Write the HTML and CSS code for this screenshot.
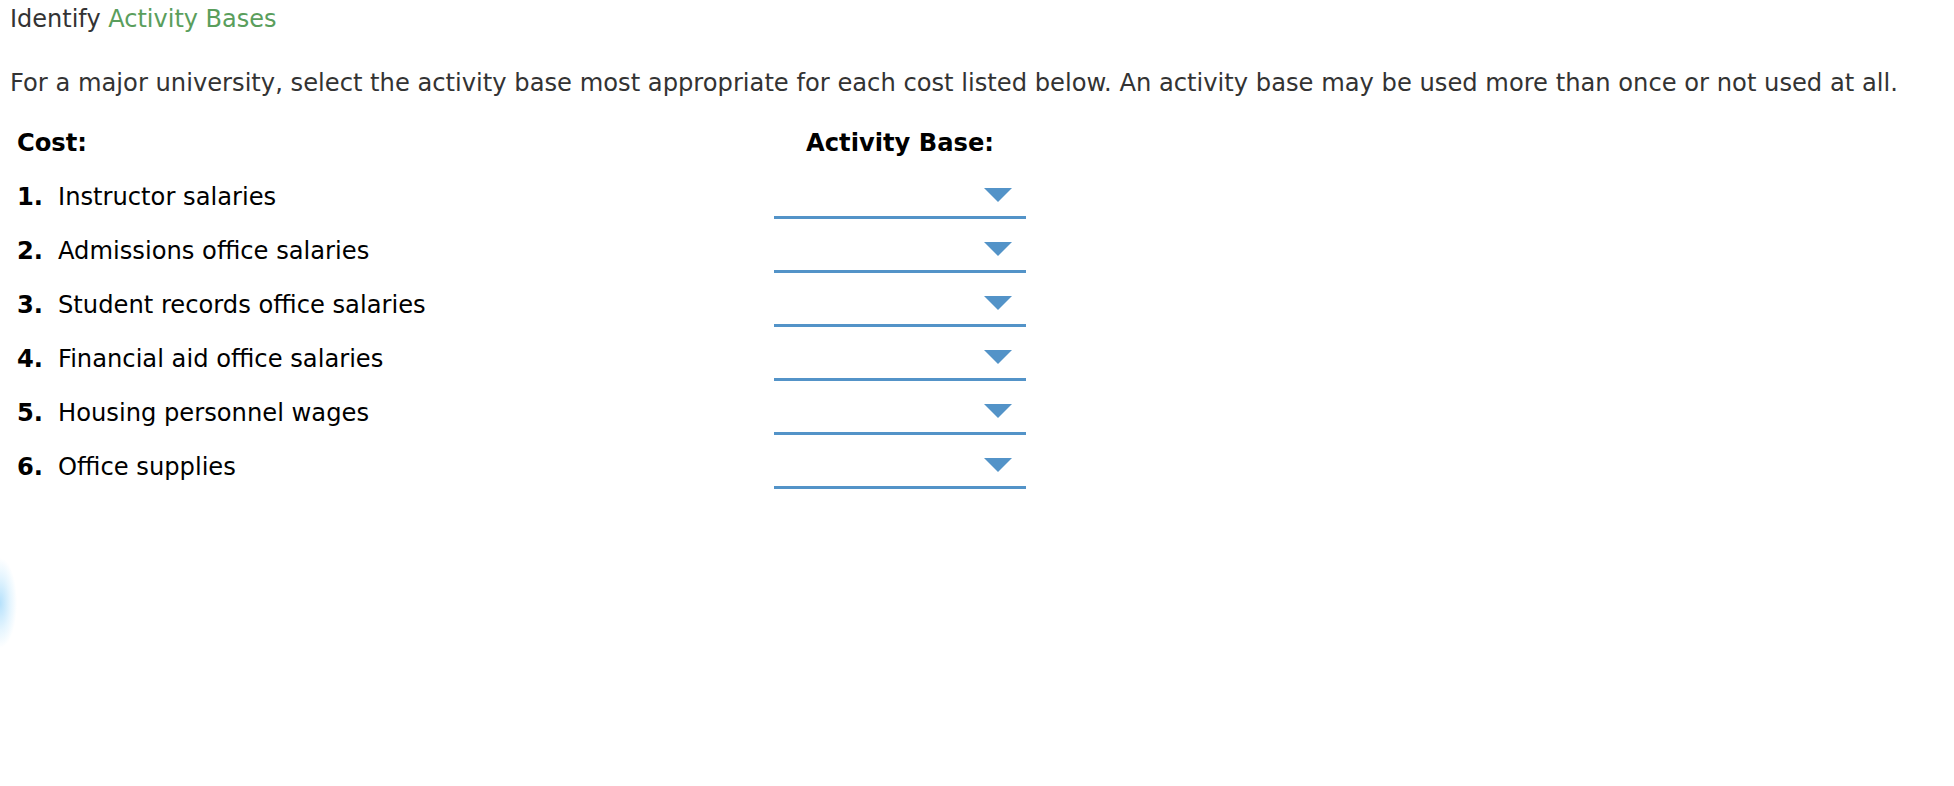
FILE: index.html
```html
<!DOCTYPE html>
<html lang="en">
<head>
    <meta charset="UTF-8">
    <title>Identify Activity Bases</title>
    <link rel="stylesheet" href="styles.css">
</head>
<body>
    <div class="question">
        <h1 class="title">Identify <span class="topic">Activity Bases</span></h1>
        <p class="prompt">For a major university, select the activity base most appropriate for each cost listed below. An activity base may be used more than once or not used at all.</p>

        <div class="match">
            <div class="match-head">
                <div class="cost-col">Cost:</div>
                <div class="base-col">Activity Base:</div>
            </div>
            <div class="match-row">
                <div class="cost-col"><span class="num">1.</span>Instructor salaries</div>
                <div class="base-col"><div class="dropdown"><span class="caret"></span></div></div>
            </div>
            <div class="match-row">
                <div class="cost-col"><span class="num">2.</span>Admissions office salaries</div>
                <div class="base-col"><div class="dropdown"><span class="caret"></span></div></div>
            </div>
            <div class="match-row">
                <div class="cost-col"><span class="num">3.</span>Student records office salaries</div>
                <div class="base-col"><div class="dropdown"><span class="caret"></span></div></div>
            </div>
            <div class="match-row">
                <div class="cost-col"><span class="num">4.</span>Financial aid office salaries</div>
                <div class="base-col"><div class="dropdown"><span class="caret"></span></div></div>
            </div>
            <div class="match-row">
                <div class="cost-col"><span class="num">5.</span>Housing personnel wages</div>
                <div class="base-col"><div class="dropdown"><span class="caret"></span></div></div>
            </div>
            <div class="match-row">
                <div class="cost-col"><span class="num">6.</span>Office supplies</div>
                <div class="base-col"><div class="dropdown"><span class="caret"></span></div></div>
            </div>
        </div>
    </div>
    <div class="glow"></div>
</body>
</html>
```

FILE: styles.css
```css
body {
    margin: 0;
    background-color: #fff;
    font-family: "DejaVu Sans", Verdana, sans-serif;
    font-size: 24.2px;
    line-height: 24px;
    color: #000;
}
.question {
    padding: 7px 0 0 10px;
}
.title {
    margin: 0;
    font-size: 24px;
    font-weight: normal;
    line-height: 24px;
    color: #333;
}
.topic {
    color: #5a9e5c;
}
.prompt {
    margin: 40px 0 0 0;
    color: #333;
}
.match {
    margin-top: 36px;
    padding-left: 7px;
}
.match-head, .match-row {
    display: flex;
}
.match-head {
    font-weight: bold;
    height: 34px;
}
.match-row {
    height: 54px;
    align-items: flex-end;
}
.cost-col {
    width: 757px;
}
.match-row .cost-col {
    margin-bottom: 10px;
}
.num {
    display: inline-block;
    width: 41px;
    font-weight: bold;
}
.base-col {
    width: 252px;
    text-align: center;
}
.dropdown {
    height: 32px;
    border-bottom: 3px solid #5393c8;
    display: flex;
    justify-content: flex-end;
    align-items: flex-end;
    padding-right: 14px;
}
.caret {
    width: 0;
    height: 0;
    border-left: 14px solid transparent;
    border-right: 14px solid transparent;
    border-top: 14px solid #5393c8;
    margin-bottom: 14px;
}
.glow {
    position: absolute;
    left: -17px;
    top: 558px;
    width: 34px;
    height: 90px;
    background: radial-gradient(closest-side, rgba(150, 212, 250, 0.7), rgba(170, 222, 252, 0.3) 60%, rgba(200, 235, 252, 0) 100%);
}
```
